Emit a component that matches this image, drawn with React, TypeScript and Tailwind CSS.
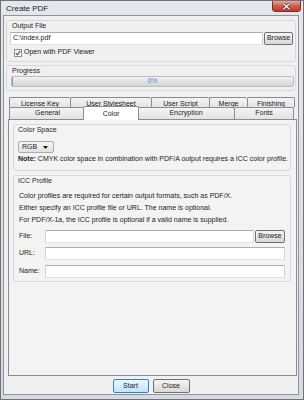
import React from 'react';

// small building blocks for the old-style dialog

function Group({ title, className = '', children }: { title: string; className?: string; children?: React.ReactNode }) {
  return (
    <div className={`flex flex-col border border-[#d5d9de] rounded-[3px] ${className}`}>
      <div className="h-[10px] leading-[10px] pl-[4px] text-[#1e1e1e]">{title}</div>
      {children}
    </div>
  );
}

function TextBox({ value = '', className = '' }: { value?: string; className?: string }) {
  return (
    <div
      className={`h-[13px] bg-white border border-[#abadb3] border-l-[#d0d4da] border-r-[#d0d4da] border-b-[#dfe3e8] flex items-center px-[2px] ${className}`}
    >
      {value}
    </div>
  );
}

function Button({ label, className = '', primary = false }: { label: string; className?: string; primary?: boolean }) {
  return (
    <div
      className={
        primary
          ? `h-[14px] flex items-center justify-center rounded-[2px] border border-[#3c7fb1] bg-linear-to-b from-[#eaf6fd] to-[#bee6fd] ${className}`
          : `h-[13px] flex items-center justify-center rounded-[2px] border border-[#707070] bg-linear-to-b from-[#f4f4f4] to-[#d8d8d8] ${className}`
      }
    >
      {label}
    </div>
  );
}

const backRow = [
  { label: 'License Key', w: 'w-[61px]' },
  { label: 'User Stylesheet', w: 'w-[81px]' },
  { label: 'User Script', w: 'w-[58px]' },
  { label: 'Merge', w: 'w-[38px]' },
  { label: 'Finishing', w: 'w-[48px]' },
];

export default function App() {
  return (
    <div className="w-[304px] h-[400px] overflow-hidden flex flex-col bg-linear-to-b from-[#e4e7eb] to-[#d6dae0] border border-[#6e7379] pl-[2px] pr-[4px] pb-[4px] font-['Liberation_Sans',Arial,sans-serif] text-[7px] text-[#1a1a1a]">
      {/* title bar */}
      <div className="h-[14px] flex items-start justify-between">
        <div className="pt-[3px] pl-[3px] text-[8px] leading-[9px] text-[#222]">Create PDF</div>
        <div className="w-[29px] h-[12px] -mt-[1px] -mr-[2px] rounded-b-[3px] border border-[#8a2c22] bg-linear-to-b from-[#e8a79c] via-[#cf5a4c] to-[#c0392b] flex items-center justify-center">
          <svg width="9" height="7" viewBox="0 0 9 7">
            <path d="M1.5 0.8 L7.5 6.2 M7.5 0.8 L1.5 6.2" stroke="#5a1a14" strokeWidth="2.6" />
            <path d="M1.5 0.8 L7.5 6.2 M7.5 0.8 L1.5 6.2" stroke="#ffffff" strokeWidth="1.4" />
          </svg>
        </div>
      </div>

      {/* client area */}
      <div className="flex-1 flex flex-col bg-[#f0f0f0] border border-[#8e949b] pt-[4px]">
        {/* Output File */}
        <Group title="Output File" className="h-[42px] ml-[2px] mr-[2px] pl-[1px]">
          <div className="flex mt-[1px] pl-[2px] pr-[2px]">
            <TextBox value="C:\index.pdf" className="w-[254px]" />
            <Button label="Browse" className="w-[29px] ml-[1px]" />
          </div>
          <div className="flex items-center h-[11px] mt-[2px] pl-[6px]">
            <div className="w-[8px] h-[8px] bg-linear-to-b from-[#f2f2f2] to-[#ffffff] border border-[#8e8f8f] flex items-center justify-center">
              <svg width="6" height="6" viewBox="0 0 6 6">
                <path d="M0.8 3.2 L2.4 4.9 L5.3 0.8" stroke="#3d5a97" strokeWidth="1.2" fill="none" />
              </svg>
            </div>
            <span className="ml-[2px]">Open with PDF Viewer</span>
          </div>
        </Group>

        {/* Progress */}
        <Group title="Progress" className="h-[26px] mt-[3px] ml-[2px] mr-[2px] pl-[1px]">
          <div className="flex-1 flex items-start pl-[3px] pr-[1px]">
            <div className="relative flex-1 h-[11px] rounded-[2px] border border-[#bcbcbc] bg-linear-to-b from-[#f3f3f3] via-[#e2e2e2] to-[#d4d4d4] flex items-center justify-center">
              <div className="absolute left-0 top-0 bottom-0 w-[1px] bg-[#5fa7e8]" />
              <span className="text-[#3f8de0]">0%</span>
            </div>
          </div>
        </Group>

        {/* tabs, back row */}
        <div className="flex mt-[6px] ml-[5px] h-[10px]">
          {backRow.map((t, i) => (
            <div
              key={t.label}
              className={`${t.w} h-full flex items-start justify-center leading-[9px] pt-[1px] border-t border-l border-[#898c95] rounded-t-[2px] bg-linear-to-b from-[#f4f4f4] to-[#e3e3e3] ${i === backRow.length - 1 ? 'border-r' : ''}`}
            >
              {t.label}
            </div>
          ))}
        </div>
        {/* tabs, front row */}
        <div className="flex items-end ml-[5px] h-[12px]">
          <div className="w-[76px] h-full flex items-center justify-center border-t border-l border-[#898c95] rounded-t-[2px] bg-linear-to-b from-[#f4f4f4] to-[#e3e3e3]">
            General
          </div>
          <div className="relative z-10 w-[56px] h-[14px] -ml-[2px] -mr-[2px] -mb-[1px] flex items-start justify-center pt-[2px] leading-[9px] border-t border-l border-r border-[#898c95] rounded-t-[2px] bg-white">
            Color
          </div>
          <div className="w-[97px] h-full flex items-center justify-center border-t border-l border-[#898c95] rounded-t-[2px] bg-linear-to-b from-[#f4f4f4] to-[#e3e3e3]">
            Encryption
          </div>
          <div className="w-[60px] h-full flex items-center justify-center border-t border-l border-r border-[#898c95] rounded-t-[2px] bg-linear-to-b from-[#f4f4f4] to-[#e3e3e3]">
            Fonts
          </div>
        </div>

        {/* tab page */}
        <div className="h-[257px] ml-[4px] mr-[1px] border border-[#898c95] bg-[#f3f3f3] flex flex-col pt-[4px]">
          <Group title="Color Space" className="h-[47px] ml-[4px] w-[278px]">
            <div className="mt-[6px] ml-[4px] w-[36px] h-[12px] rounded-[2px] border border-[#acacac] bg-linear-to-b from-[#f6f6f6] to-[#e2e2e2] flex items-center justify-between pl-[3px] pr-[5px]">
              <span>RGB</span>
              <svg width="5" height="3" viewBox="0 0 5 3">
                <path d="M0 0 L5 0 L2.5 3 Z" fill="#111" />
              </svg>
            </div>
            <div className="mt-[1px] pl-[4px] h-[10px] leading-[10px] whitespace-nowrap">
              <b>Note:</b> CMYK color space in combination with PDF/A output requires a ICC color profile.
            </div>
          </Group>

          <Group title="ICC Profile" className="h-[107px] mt-[4px] ml-[4px] w-[278px]">
            <div className="mt-[4px] pl-[5px] flex flex-col leading-[12px] whitespace-nowrap">
              <div>Color profiles are required for certain output formats, such as PDF/X.</div>
              <div>Either specify an ICC profile file or URL. The name is optional.</div>
              <div>For PDF/X-1a, the ICC profile is optional if a valid name is supplied.</div>
            </div>
            <div className="mt-[4px] pl-[5px] flex items-center">
              <span className="w-[26px]">File:</span>
              <TextBox className="w-[209px]" />
              <Button label="Browse" className="w-[30px] ml-[1px]" />
            </div>
            <div className="mt-[4px] pl-[5px] flex items-center">
              <span className="w-[26px]">URL:</span>
              <TextBox className="w-[240px]" />
            </div>
            <div className="mt-[5px] pl-[5px] flex items-center">
              <span className="w-[26px]">Name:</span>
              <TextBox className="w-[240px]" />
            </div>
          </Group>
        </div>

        {/* dialog buttons */}
        <div className="mt-[3px] flex justify-center gap-[4px]">
          <Button label="Start" primary className="w-[36px]" />
          <Button label="Close" className="w-[37px] h-[14px]" />
        </div>
      </div>
    </div>
  );
}
